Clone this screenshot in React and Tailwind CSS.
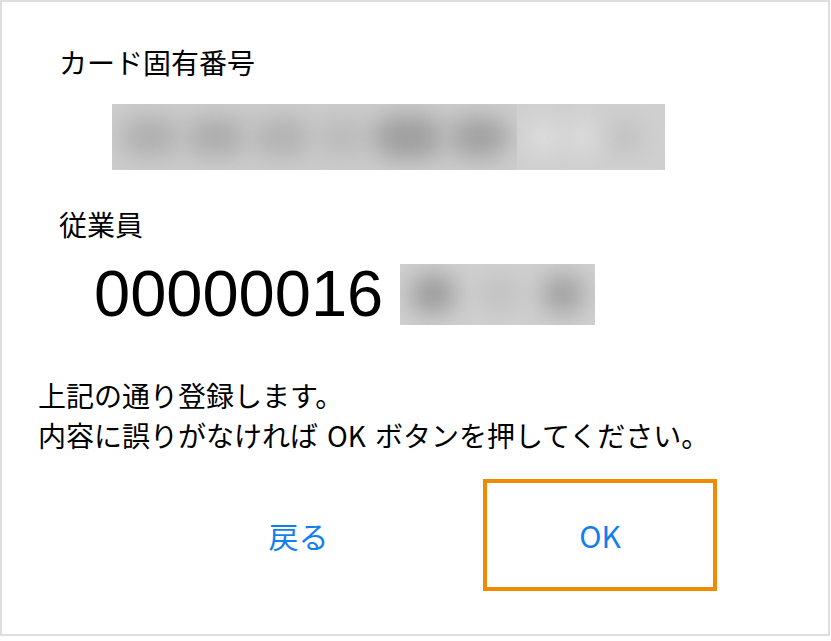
import React from 'react';

const jp = { fontFamily: '"Noto Sans CJK JP", "Noto Sans", sans-serif' };

function Blurred({ className, blobs }) {
    return (
        <div className={`flex items-center overflow-hidden ${className}`}>
            {blobs.map((b, i) => (
                <div key={i} className={b} />
            ))}
        </div>
    );
}

export default function App() {
    return (
        <div className="w-[831px] h-[641px] bg-white" style={jp}>
            <div className="w-[830px] h-[636px] border-2 border-[#dedede] bg-white flex flex-col text-black">
                <div className="pl-[57px] pt-[43px] text-[28px] leading-[34px]">カード固有番号</div>

                <div className="pl-[110px] pt-[25px]">
                    <div className="flex w-[553px] h-[66px]">
                        <Blurred
                            className="w-[405px] h-full bg-[#cdcdcd] gap-[6px] px-[8px]"
                            blobs={[
                                'w-[60px] h-[40px] rounded-full bg-[#afafaf] blur-md',
                                'w-[60px] h-[40px] rounded-full bg-[#acacac] blur-md',
                                'w-[60px] h-[40px] rounded-full bg-[#b2b2b2] blur-md',
                                'w-[50px] h-[40px] rounded-full bg-[#bababa] blur-md',
                                'w-[70px] h-[44px] rounded-full bg-[#9e9e9e] blur-md',
                                'w-[60px] h-[40px] rounded-full bg-[#a0a0a0] blur-md',
                            ]}
                        />
                        <Blurred
                            className="w-[148px] h-full bg-[#d0d0d0] gap-[10px] px-[12px]"
                            blobs={[
                                'w-[30px] h-[30px] rounded-full bg-[#e2e2e2] blur-md',
                                'w-[30px] h-[30px] rounded-full bg-[#e0e0e0] blur-md',
                                'w-[34px] h-[36px] rounded-full bg-[#c0c0c0] blur-md',
                            ]}
                        />
                    </div>
                </div>

                <div className="pl-[57px] pt-[37px] text-[28px] leading-[34px]">従業員</div>

                <div className="pl-[92px] pt-[18px] flex items-center gap-[17px]">
                    <span
                        className="text-[65px] leading-[70px]"
                        style={{ fontFamily: '"Liberation Sans", Arial, sans-serif' }}
                    >
                        00000016
                    </span>
                    <Blurred
                        className="w-[195px] h-[61px] bg-[#d0d0d0] gap-[20px] px-[10px] justify-between"
                        blobs={[
                            'w-[46px] h-[40px] rounded-full bg-[#9a9a9a] blur-md',
                            'w-[40px] h-[36px] rounded-full bg-[#c0c0c0] blur-md',
                            'w-[44px] h-[40px] rounded-full bg-[#a0a0a0] blur-md',
                        ]}
                    />
                </div>

                <div className="pl-[36px] pt-[46px] text-[28px] leading-[40px]">
                    <div>上記の通り登録します。</div>
                    <div>
                        内容に誤りがなければ<span className="mx-[9px]">OK</span>ボタンを押してください。
                    </div>
                </div>

                <div className="pl-[180px] pt-[24px] flex items-center gap-[68px] text-[30px] text-[#127ff0]">
                    <button className="w-[233px] h-[112px] flex items-center justify-center">戻る</button>
                    <button className="w-[234px] h-[112px] border-4 border-[#f08a00] flex items-center justify-center">OK</button>
                </div>
            </div>
        </div>
    );
}
